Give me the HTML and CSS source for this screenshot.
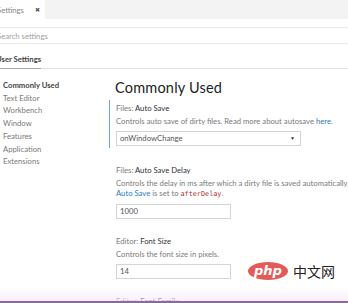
FILE: index.html
```html
<!DOCTYPE html>
<html lang="en">
<head>
    <meta charset="UTF-8">
    <title>Settings</title>
    <link rel="stylesheet" href="styles.css">
</head>
<body>
    <div class="tabs">
        <div class="tab"><span class="tab-name">Settings</span><span class="tab-close">&#x2716;</span></div>
    </div>

    <div class="search">Search settings</div>

    <div class="scopes">
        <div class="scope active">User Settings</div>
    </div>

    <div class="editor">
        <ul class="toc">
            <li class="current">Commonly Used</li>
            <li>Text Editor</li>
            <li>Workbench</li>
            <li>Window</li>
            <li>Features</li>
            <li>Application</li>
            <li>Extensions</li>
        </ul>

        <div class="settings">
            <h2>Commonly Used</h2>

            <div class="setting focused">
                <div class="setting-title">Files: <b>Auto Save</b></div>
                <div class="setting-desc">Controls auto save of dirty files. Read more about autosave <a href="#">here</a>.</div>
                <div class="select">onWindowChange<span class="arrow">&#9660;</span></div>
            </div>

            <div class="setting">
                <div class="setting-title">Files: <b>Auto Save Delay</b></div>
                <div class="setting-desc">Controls the delay in ms after which a dirty file is saved automatically.<br><a href="#">Auto Save</a> is set to <code>afterDelay</code>.</div>
                <div class="input">1000</div>
            </div>

            <div class="setting">
                <div class="setting-title">Editor: <b>Font Size</b></div>
                <div class="setting-desc">Controls the font size in pixels.</div>
                <div class="input">14</div>
            </div>

            <div class="setting">
                <div class="setting-title">Editor: <b>Font Family</b></div>
            </div>
        </div>
    </div>

    <!-- watermark that sits over the page -->
    <div class="watermark">
        <span class="php-logo">php</span>
        <span class="php-cn">中文网</span>
    </div>
    <div class="bottom-fade"></div>
</body>
</html>
```

FILE: styles.css
```css
body {
    margin: 0;
    width: 348px;
    height: 303px;
    overflow: hidden;
    position: relative;
    background: #fff;
    font-family: Lato, "Open Sans", sans-serif;
    font-size: 7.7px;
    color: #7a7a7a;
}
.tabs {
    height: 19px;
    background: #f3f3f3;
    display: flex;
}
.tab {
    width: 45px;
    background: #fff;
    display: flex;
    align-items: center;
    overflow: hidden;
}
.tab-name {
    margin-left: -3px;
    color: #888;
}
.tab-close {
    margin-left: 11px;
    font-size: 6px;
    color: #555;
}
.search {
    margin-top: 8px;
    height: 15px;
    line-height: 16px;
    border-top: 1px solid #e8e8e8;
    border-bottom: 1px solid #e8e8e8;
    text-indent: -3px;
    color: #a0a0a0;
}
.scopes {
    height: 24px;
    border-bottom: 1px solid #e0e0e0;
    display: flex;
    align-items: flex-end;
}
.scope {
    width: 45px;
    margin-left: -4px;
    padding-bottom: 4px;
    line-height: 10px;
    color: #444;
    font-weight: 700;
    white-space: nowrap;
    border-bottom: 1px solid #a8a8a8;
    margin-bottom: -1px;
}
.editor {
    display: grid;
    grid-template-columns: 109px 1fr;
}
.toc {
    list-style: none;
    margin: 0;
    padding: 10px 0 0 3px;
}
.toc li {
    line-height: 12.7px;
    white-space: nowrap;
}
.toc .current {
    color: #444;
    font-weight: 700;
}
.settings {
    padding-top: 9px;
}
h2 {
    margin: 0 0 2px 6px;
    font-size: 14.5px;
    font-weight: 400;
    line-height: 20px;
    color: #222;
    letter-spacing: 0.2px;
}
.setting {
    padding: 2px 0 14px 6px;
    border-left: 1px solid transparent;
}
.setting.focused {
    border-left-color: #6aa6d6;
    padding-bottom: 2px;
    margin-bottom: 14px;
}
.setting-title {
    line-height: 13px;
    white-space: nowrap;
}
.setting-title b {
    color: #333;
    font-weight: 400;
}
.setting-desc {
    line-height: 10px;
    margin-top: 1px;
    white-space: nowrap;
}
a {
    color: #2a7ac2;
    text-decoration: none;
}
code {
    font-family: "DejaVu Sans Mono", monospace;
    font-size: 6.8px;
    color: #b03030;
}
.select, .input {
    box-sizing: border-box;
    height: 15px;
    line-height: 13px;
    border: 1px solid #d4d4d4;
    padding: 0 3px;
    margin-top: 5px;
    color: #555;
}
.select {
    width: 185px;
    display: flex;
    justify-content: space-between;
}
.arrow {
    font-size: 5px;
    color: #333;
    margin-right: 2px;
}
.input {
    width: 115px;
}
.watermark {
    position: absolute;
    left: 248px;
    top: 261px;
    display: flex;
    align-items: center;
    gap: 5px;
}
.php-logo {
    width: 40px;
    height: 18px;
    border-radius: 50%;
    background: #e25a5a;
    color: #fff;
    font-style: italic;
    font-weight: 700;
    font-size: 13px;
    line-height: 17px;
    text-align: center;
    font-family: "DejaVu Sans", sans-serif;
}
.php-cn {
    font-family: "Noto Sans CJK SC", sans-serif;
    font-size: 14px;
    color: #222;
}
.bottom-fade {
    position: absolute;
    left: 0;
    right: 0;
    bottom: 0;
    height: 14px;
    background: linear-gradient(rgba(250, 235, 250, 0), rgba(248, 232, 248, 0.7));
    border-bottom: 2px solid #8a6a98;
}
```
